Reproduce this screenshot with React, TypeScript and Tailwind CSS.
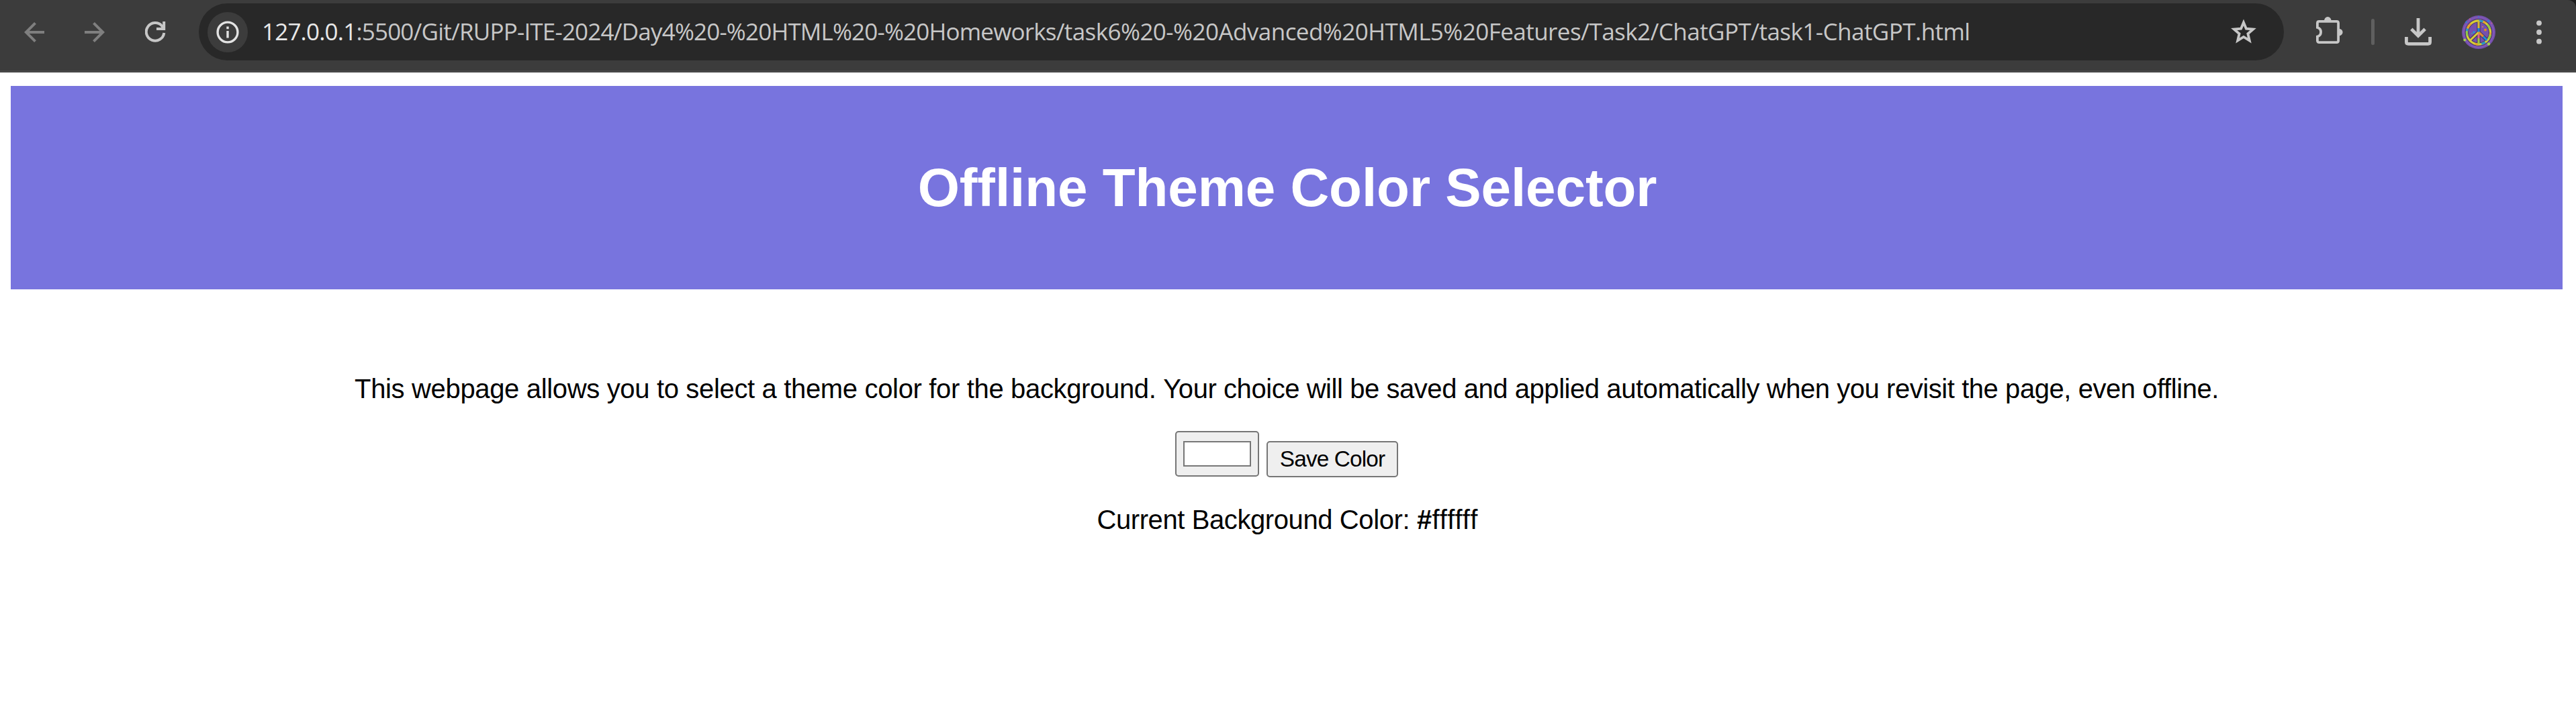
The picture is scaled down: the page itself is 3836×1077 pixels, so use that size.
import React from "react";

function NavButtons() {
  return (
    <div className="flex h-[85px] w-[296px] shrink-0 items-center">
      <svg className="ml-[36px] h-[30px] w-[30px]" viewBox="0 0 30 30" fill="none" stroke="#7f7f7f" strokeWidth="4">
        <path d="M30 15H3M16.5 1.4L2.8 15L16.5 28.6" />
      </svg>
      <svg className="ml-[60px] h-[30px] w-[30px]" viewBox="0 0 30 30" fill="none" stroke="#7f7f7f" strokeWidth="4">
        <path d="M0 15H27M13.5 1.4L27.2 15L13.5 28.6" />
      </svg>
      <svg className="ml-[60px] h-[31px] w-[31px]" viewBox="0 0 31 31" fill="none" stroke="#c7c7c7" strokeWidth="4">
        <path d="M28.3 17A13.3 13.3 0 1 1 25 6.5L27.5 10.5M28.2 0V11H17" />
      </svg>
    </div>
  );
}

function AddressBar() {
  return (
    <div className="flex h-[85px] w-[3105px] shrink-0 items-center rounded-full bg-[#282828]">
      <div className="ml-[13px] flex h-[60px] w-[60px] shrink-0 items-center justify-center rounded-full bg-[#3c3c3c]">
        <svg className="h-[34px] w-[34px]" viewBox="0 0 34 34" fill="none" stroke="#e3e3e3">
          <circle cx="17" cy="17" r="14.9" strokeWidth="3.4" />
          <path d="M17 15v10.5M17 8.6v3.6" strokeWidth="3.4" />
        </svg>
      </div>
      <div className="mb-[2px] ml-[21px] whitespace-nowrap font-['Open_Sans',sans-serif] text-[35px] leading-[48px] text-[#c7c7c7]">
        <span className="tracking-[-0.81px] text-[#e8e8e8]">127.0.0.1</span>
        <span className="tracking-[-0.81px]">:5500/Git/RUPP-ITE-2024/Day4%20-%20HTML%20-%20Homeworks/</span>
        <span className="tracking-[-0.54px]">task6%20-%20Advanced%20HTML5%20Features/Task2/ChatGPT/task1-ChatGPT.html</span>
      </div>
      <svg className="mr-[40px] mb-[2px] ml-auto h-[38px] w-[40px]" viewBox="0 0 40 38" fill="none" stroke="#c7c7c7" strokeWidth="3.8">
        <path d="M20 5.4L23.9 14.7L34.2 15.6L26.4 22.3L28.8 32.4L20 27L11.2 32.4L13.6 22.3L5.8 15.6L16.1 14.7Z" />
      </svg>
    </div>
  );
}

function Avatar() {
  return (
    <svg className="ml-[45px] h-[50px] w-[50px]" viewBox="0 0 50 50" fill="none">
      <circle cx="25" cy="25" r="25" fill="#7650ae" />
      <circle cx="25" cy="25" r="22.3" stroke="#8961bd" strokeWidth="1" />
      <g stroke="#4b3a68" strokeWidth="5.4">
        <circle cx="25" cy="25.5" r="17.6" />
        <path d="M25 8V43M25 25L12.5 37M25 25L37.5 37" />
      </g>
      <g strokeWidth="3.1">
        <circle cx="25" cy="25.5" r="17.6" stroke="#d6cf35" />
        <circle cx="25" cy="25.5" r="17.6" stroke="#e6a02e" strokeDasharray="9 19 5 28" />
        <circle cx="25" cy="25.5" r="17.6" stroke="#2593cf" strokeDasharray="6 34 4 22" strokeDashoffset="-17" />
        <circle cx="25" cy="25.5" r="17.6" stroke="#8fc94a" strokeDasharray="7 40" strokeDashoffset="-50" />
        <path d="M25 8V19" stroke="#d7b83a" />
        <path d="M25 19V26" stroke="#1587df" />
        <path d="M25 26V34" stroke="#d9658a" />
        <path d="M25 34V43" stroke="#9fc73f" />
        <path d="M25 25L12.5 37" stroke="#d8cc38" />
        <path d="M25 25L32 31.5" stroke="#e08a35" />
        <path d="M32 31.5L37.5 37" stroke="#1b8edc" />
      </g>
      <circle cx="35" cy="21.5" r="2" fill="#e38b22" />
      <circle cx="18" cy="25" r="1.7" fill="#2497dc" />
      <circle cx="31" cy="17" r="1" fill="#d79a3c" />
      <circle cx="15" cy="27" r="1" fill="#3bb3a0" />
      <circle cx="39.5" cy="8.3" r="1.7" fill="#2b82d6" />
      <circle cx="6.5" cy="10" r="1.3" fill="#2b82d6" />
      <circle cx="12" cy="5.5" r="1" fill="#d0637c" />
      <circle cx="25" cy="2.3" r="1.1" fill="#3f79d4" />
      <circle cx="44.5" cy="11.5" r="1" fill="#c65f8a" />
      <circle cx="4.3" cy="36.5" r="2" fill="#a5d04e" />
      <circle cx="40" cy="42.5" r="2.2" fill="#a5d04e" />
    </svg>
  );
}

function Toolbar() {
  return (
    <div className="bg-[#1f1f1f]">
      <div className="flex h-[108px] w-full items-start rounded-tr-[12px] border-b-[3px] border-[#474747] bg-[#3c3c3c] pt-[5px]">
        <NavButtons />
        <AddressBar />
        <div className="flex h-[85px] items-center">
          <svg className="ml-[48px] h-[45px] w-[40px]" viewBox="0 0 40 45" fill="none">
            <path
              d="M1.9 16V9.4Q1.9 6.9 4.4 6.9H30.6Q33.1 6.9 33.1 9.4V35.6Q33.1 38.1 30.6 38.1H4.4Q1.9 38.1 1.9 35.6V29.5C8.8 27.5 8.8 18 1.9 16Z"
              stroke="#c7c7c7"
              strokeWidth="3.8"
            />
            <path d="M12 6a5.3 6 0 0 1 10.6 0ZM34 17.7a5.6 5.3 0 0 1 0 10.6Z" fill="#c7c7c7" />
          </svg>
          <div className="ml-[42px] h-[39px] w-[5px] rounded-full bg-[#5f5f5f]" />
          <svg className="ml-[45px] h-[41px] w-[40px]" viewBox="0 0 40 41" fill="none" stroke="#c7c7c7" strokeWidth="4.8">
            <path d="M20 0V25M9.8 16.2L20 26.4L30.2 16.2M2.4 28V35.6Q2.4 38.4 5.2 38.4H34.8Q37.6 38.4 37.6 35.6V28" />
          </svg>
          <Avatar />
          <svg className="ml-[61px] h-[36px] w-[8px]" viewBox="0 0 8 36" fill="#c7c7c7">
            <circle cx="4" cy="4.3" r="3.9" />
            <circle cx="4" cy="18" r="3.9" />
            <circle cx="4" cy="31.7" r="3.9" />
          </svg>
        </div>
      </div>
    </div>
  );
}

export default function App() {
  return (
    <div className="h-[1077px] w-[3836px] overflow-hidden bg-white font-['Liberation_Sans',sans-serif] text-black">
      <Toolbar />
      <header className="mt-[20px] ml-[16px] flex h-[303px] w-[3800px] items-center justify-center bg-[#7874de] pt-px pl-[2px]">
        <h1 className="text-[80px] leading-[92px] font-bold tracking-[-0.06px] text-white">Offline Theme Color Selector</h1>
      </header>
      <main className="ml-[16px] flex w-[3800px] flex-col items-center pt-[125px]">
        <p className="text-[40px] leading-[46px] tracking-[-0.44px] whitespace-nowrap">
          <span className="tracking-[-0.34px]">This webpage allows you to select a theme color for the background. </span>
          Your choice will be saved and applied automatically when you revisit the page, even offline.
        </p>
        <div className="mt-[40px] flex h-[69px] items-end gap-[11px]">
          <div className="mb-px h-[68px] w-[125px] rounded-[5px] border-2 border-[#767676] bg-[#efefef] px-[10px] pt-[13px]">
            <div className="h-[38px] border-2 border-[#777777] bg-white" />
          </div>
          <button className="h-[54px] w-[196px] rounded-[5px] border-2 border-[#767676] bg-[#efefef] text-[33.33px] leading-[38px] tracking-[-0.85px]">
            Save Color
          </button>
        </div>
        <p className="mt-[40px] pl-[2px] text-[40px] leading-[46px] tracking-[-0.4px] whitespace-nowrap">
          Current Background Color:{" "}
          <span className="tracking-[0.25px] [font-kerning:none]">
            <span className="font-bold">#</span>ffffff
          </span>
        </p>
      </main>
    </div>
  );
}
